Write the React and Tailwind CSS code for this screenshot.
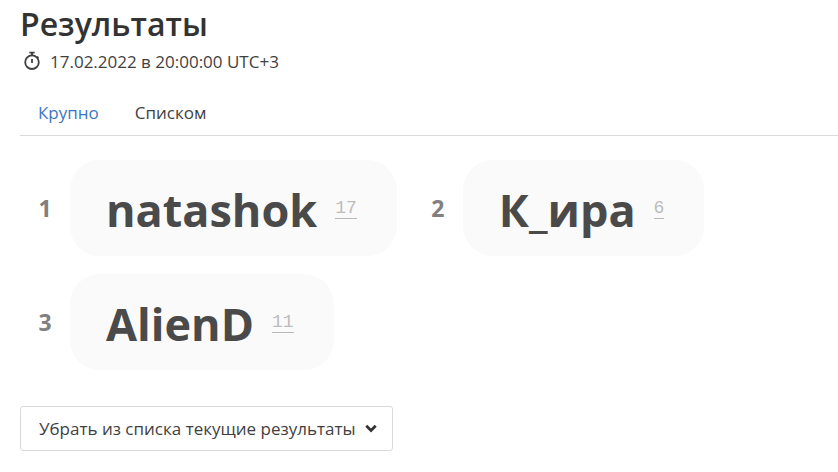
import { useState } from 'react';

const winners = [
  { place: 1, name: 'natashok', ticket: 17 },
  { place: 2, name: 'К_ира', ticket: 6 },
  { place: 3, name: 'AlienD', ticket: 11 },
];

const tabs = [
  { id: 'large', label: 'Крупно' },
  { id: 'list', label: 'Списком' },
];

function StopwatchIcon() {
  return (
    <svg className="w-6 h-6 shrink-0" viewBox="0 0 24 24" fill="none" stroke="#3f3f3f" strokeWidth="1.8" aria-hidden="true">
      <circle cx="12" cy="12.2" r="6.8" />
      <path d="M12 9v4M12 2.5v3M9.4 2.6h5.2M17 6.6l1.4 1.4" />
    </svg>
  );
}

function WinnerCard({ place, name, ticket }) {
  return (
    <li className="flex items-center">
      <span className="w-[50px] text-center text-[23px] font-bold text-[#808080]">{place}</span>
      <div className="flex items-center gap-[18px] h-24 pl-9 pr-10 rounded-[30px] bg-[#fafafa]">
        <span className="pt-1 text-[45px] font-bold text-[#4a4a4a]">{name}</span>
        <a href={`#ticket-${ticket}`} className="border-b border-[#b8b8b8] font-['Liberation_Mono',monospace] text-lg leading-5 text-[#bcbcbc]">
          {ticket}
        </a>
      </div>
    </li>
  );
}

export default function App() {
  const [activeTab, setActiveTab] = useState('large');

  return (
    <main className="pl-5 pt-1 pb-5 bg-white font-['Open_Sans','Noto_Sans',sans-serif] text-[#3f3f3f]">
      <h1 className="text-[32px] leading-10 font-semibold text-[#333333]">Результаты</h1>
      <div className="flex items-center gap-[6px] mt-1 text-[17px] leading-7">
        <StopwatchIcon />
        <time dateTime="2022-02-17T20:00:00+03:00">17.02.2022 в 20:00:00 UTC+3</time>
      </div>

      <div role="tablist" className="flex mt-[15px] border-b border-[#d9d9d9]">
        {tabs.map((tab) => (
          <button
            key={tab.id}
            type="button"
            role="tab"
            aria-selected={activeTab === tab.id}
            onClick={() => setActiveTab(tab.id)}
            className={`px-[18px] py-2 text-[17px] leading-7 cursor-pointer ${activeTab === tab.id ? 'text-[#3b76c4]' : 'text-[#3f3f3f]'}`}
          >
            {tab.label}
          </button>
        ))}
      </div>

      <ol className={`flex gap-x-4 gap-y-[18px] mt-6 ${activeTab === 'large' ? 'flex-wrap' : 'flex-col'}`}>
        {winners.map((winner) => (
          <WinnerCard key={winner.place} {...winner} />
        ))}
      </ol>

      <div className="relative inline-block mt-9">
        <select
          aria-label="Действие с результатами"
          className="h-[45px] pl-[18px] pr-9 appearance-none border border-[#d9d9d9] rounded-[3px] bg-white text-[17px] text-[#3f3f3f] cursor-pointer"
        >
          <option>Убрать из списка текущие результаты</option>
        </select>
        <svg className="absolute right-4 top-4 w-3 h-3 pointer-events-none" viewBox="0 0 12 12" fill="none" stroke="#333333" strokeWidth="2.8" aria-hidden="true">
          <path d="M1.3 3.8L6 8.5l4.7-4.7" />
        </svg>
      </div>
    </main>
  );
}
